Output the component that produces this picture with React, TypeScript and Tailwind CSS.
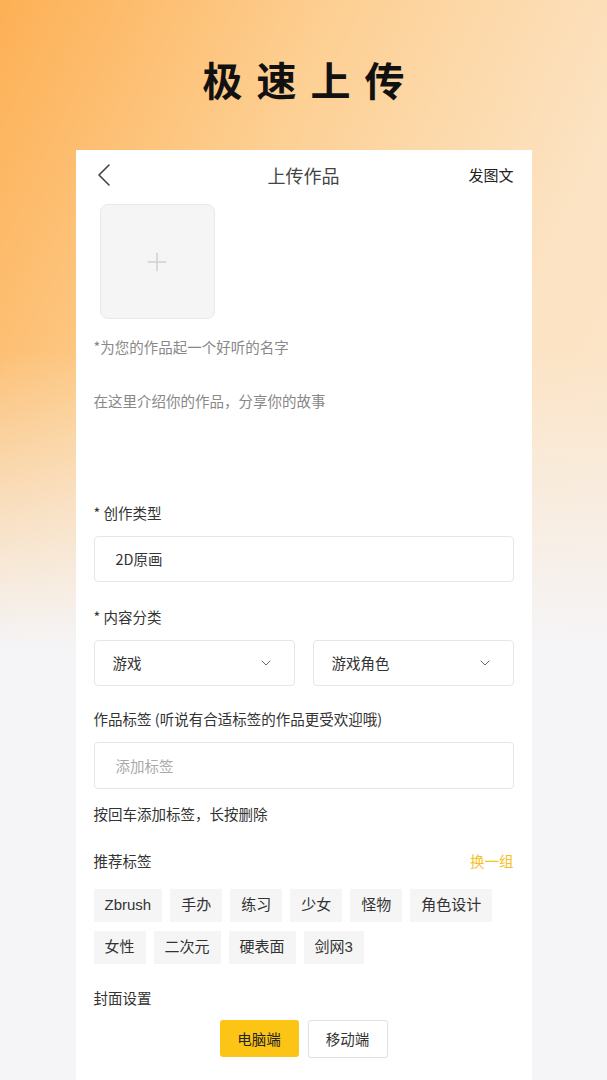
import React from 'react';
import { ChevronDown, Plus } from 'lucide-react';

const tagRows = [
  ['Zbrush', '手办', '练习', '少女', '怪物', '角色设计'],
  ['女性', '二次元', '硬表面', '剑网3'],
];

const Select = ({ label }: { label: string }) => (
  <div className="flex h-[46px] flex-1 items-center justify-between rounded-[4px] border border-[#e6e6e6] pl-[18px] pr-[20px] text-[14.5px] text-[#333]">
    <span>{label}</span>
    <ChevronDown className="h-4 w-4 text-[#666]" strokeWidth={1.5} />
  </div>
);

export default function App() {
  return (
    <div
      className="relative min-h-[1080px] w-full overflow-hidden bg-[linear-gradient(to_bottom,rgba(245,245,248,0)_0%,rgba(245,245,248,0)_32%,#f5f5f8_60%),linear-gradient(115deg,#fdb055_0%,#fdcf92_30%,#fce3c3_60%,#fbe6cf_100%)] font-['Noto_Sans_CJK_SC','Noto_Sans',sans-serif]"
    >
      {/* faint arc behind the card */}
      <div className="absolute left-[52px] top-[440px] h-[200px] w-[120px] rounded-full bg-[radial-gradient(circle_at_right,rgba(250,215,200,0.5),rgba(250,215,200,0)_70%)]"></div>

      <h1 className="relative pl-[0.35em] pt-[50px] text-center text-[40px] font-bold leading-[58px] tracking-[0.35em] text-[#111]">
        极速上传
      </h1>

      <div className="relative mx-auto mt-[42px] min-h-[930px] w-[456px] bg-white px-[18px] pb-8">
        {/* header */}
        <div className="relative flex h-[50px] items-center justify-between">
          <svg width="14" height="24" viewBox="0 0 14 24" className="ml-[3px] text-[#444]">
            <polyline points="12,2 2,12 12,22" fill="none" stroke="currentColor" strokeWidth="1.6" strokeLinecap="round" strokeLinejoin="round" />
          </svg>
          <span className="absolute left-1/2 -translate-x-1/2 text-[18px] text-[#444]">上传作品</span>
          <span className="text-[15px] text-[#222]">发图文</span>
        </div>

        {/* upload box */}
        <div className="ml-[6px] mt-[4px] flex h-[115px] w-[115px] items-center justify-center rounded-[8px] border border-[#e8e8e8] bg-[#f5f5f5]">
          <Plus className="h-[30px] w-[30px] text-[#cfcfcf]" strokeWidth={1.2} />
        </div>

        <p className="mt-[18px] text-[14.5px] leading-[20px] text-[#888]">*为您的作品起一个好听的名字</p>
        <p className="mt-[34px] text-[14.5px] leading-[20px] text-[#888]">在这里介绍你的作品，分享你的故事</p>

        <p className="mt-[92px] text-[14.5px] leading-[20px] text-[#333]">* 创作类型</p>
        <div className="mt-[13px] flex h-[46px] items-center rounded-[4px] border border-[#e6e6e6] pl-[21px] text-[14.5px] text-[#333]">
          2D原画
        </div>

        <p className="mt-[25px] text-[14.5px] leading-[20px] text-[#333]">* 内容分类</p>
        <div className="mt-[13px] flex gap-[18px]">
          <Select label="游戏" />
          <Select label="游戏角色" />
        </div>

        <p className="mt-[23px] text-[14.5px] leading-[20px] text-[#333]">作品标签 (听说有合适标签的作品更受欢迎哦)</p>
        <div className="mt-[13px] flex h-[47px] items-center rounded-[4px] border border-[#e6e6e6] pl-[21px] text-[14.5px] text-[#aaa]">
          添加标签
        </div>

        <p className="mt-[15px] text-[14.5px] leading-[20px] text-[#333]">按回车添加标签，长按删除</p>

        <div className="mt-[27px] flex items-center justify-between text-[14.5px] leading-[20px]">
          <span className="text-[#333]">推荐标签</span>
          <span className="text-[#f7c01f]">换一组</span>
        </div>

        <div className="mt-[18px] flex flex-col gap-[9px]">
          {tagRows.map((row, i) => (
            <div key={i} className="flex gap-[8px]">
              {row.map((t) => (
                <span
                  key={t}
                  className="flex h-[33px] items-center bg-[#f5f5f5] px-[11px] font-['Liberation_Sans','Noto_Sans_CJK_SC',sans-serif] text-[15px] text-[#333]"
                >
                  {t}
                </span>
              ))}
            </div>
          ))}
        </div>

        <p className="mt-[24px] text-[14.5px] leading-[20px] text-[#333]">封面设置</p>
        <div className="mt-[12px] flex justify-center gap-[9px]">
          <span className="flex h-[37px] w-[79px] items-center justify-center rounded-[3px] bg-[#fcc414] text-[14.5px] text-[#222]">
            电脑端
          </span>
          <span className="flex h-[38px] w-[80px] items-center justify-center rounded-[3px] border border-[#e0e0e0] text-[14.5px] text-[#333]">
            移动端
          </span>
        </div>
      </div>
    </div>
  );
}
